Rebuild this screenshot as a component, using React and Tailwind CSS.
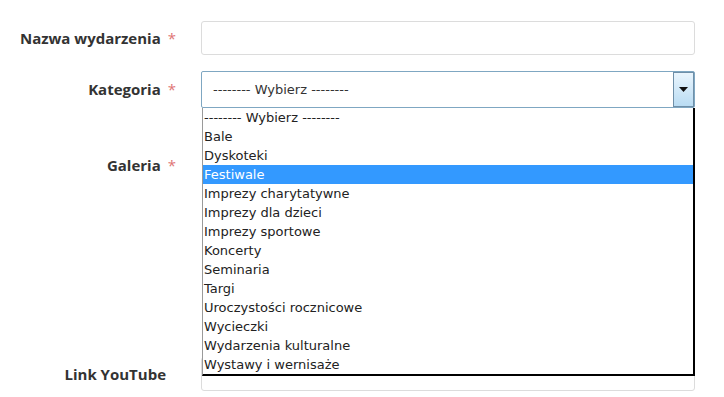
import React from "react";

const options = [
  "-------- Wybierz --------",
  "Bale",
  "Dyskoteki",
  "Festiwale",
  "Imprezy charytatywne",
  "Imprezy dla dzieci",
  "Imprezy sportowe",
  "Koncerty",
  "Seminaria",
  "Targi",
  "Uroczystości rocznicowe",
  "Wycieczki",
  "Wydarzenia kulturalne",
  "Wystawy i wernisaże",
];

function Label({ text, required }) {
  return (
    <div className="w-[201px] shrink-0 flex justify-end pr-[25px] font-['Open_Sans',sans-serif] font-bold text-[15px] text-[#333]">
      <span>{text}</span>
      {required ? (
        <span className="ml-[7px] text-[#e07575] font-normal">*</span>
      ) : (
        <span className="ml-[8px] w-[2px]" />
      )}
    </div>
  );
}

export default function App() {
  return (
    <div className="w-[724px] h-[397px] bg-white overflow-hidden relative">
      <div className="flex flex-col pt-[21px]">
        <div className="flex items-center h-[34px]">
          <Label text="Nazwa wydarzenia" required />
          <div className="w-[494px] h-[34px] border border-[#dcdcdc] rounded-[3px]" />
        </div>
        <div className="flex items-center h-[37px] mt-[16px]">
          <Label text="Kategoria" required />
          <div className="relative w-[494px] h-[37px]">
            <div className="w-full h-full border border-[#7fa7c2] rounded-[2px] flex items-center pl-[11px] font-['DejaVu_Sans',sans-serif] text-[13px] text-[#333]">
              -------- Wybierz --------
            </div>
            <div className="absolute right-[1px] top-[1px] w-[21px] h-[35px] border border-[#6f8fa8] bg-gradient-to-b from-[#eaf5fd] to-[#b9dcf3] flex items-center justify-center">
              <svg width="9" height="5" viewBox="0 0 9 5">
                <path d="M0 0 H9 L4.5 5 Z" fill="#111" />
              </svg>
            </div>
            <div className="absolute left-[1px] top-[37px] w-[493px] bg-white border-l border-l-[#9a9a9a] border-r-2 border-r-black border-b-2 border-b-black z-10 font-['DejaVu_Sans',sans-serif] text-[13px] text-[#222]">
              {options.map((o) => (
                <div
                  key={o}
                  className={
                    "h-[19px] leading-[19px] pl-[1px] whitespace-nowrap " +
                    (o === "Festiwale" ? "bg-[#3399ff] text-white" : "")
                  }
                >
                  {o}
                </div>
              ))}
            </div>
          </div>
        </div>
        <div className="flex items-center h-[34px] mt-[40px]">
          <Label text="Galeria" required />
          <div className="w-[494px] h-[34px]" />
        </div>
        <div className="flex items-center h-[34px] mt-[175px]">
          <Label text="Link YouTube" />
          <div className="w-[494px] h-[34px] border border-[#dcdcdc] rounded-[3px]" />
        </div>
      </div>
    </div>
  );
}
